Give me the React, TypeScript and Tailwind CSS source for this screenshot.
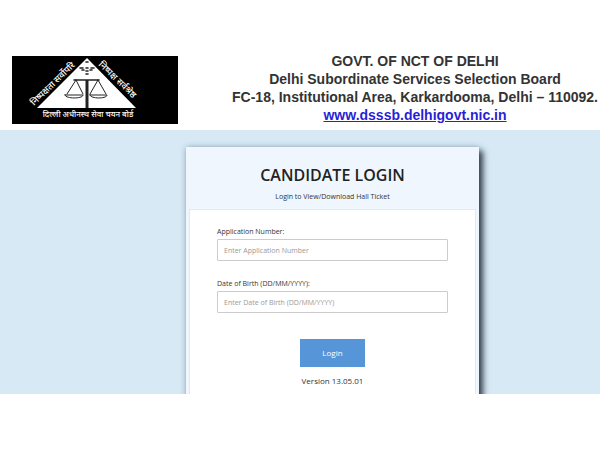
import { useState } from 'react';

function Emblem() {
  return (
    <svg
      viewBox="0 0 166 68"
      role="img"
      aria-label="Delhi Subordinate Services Selection Board"
      className="w-[166px] shrink-0 bg-black font-['Noto_Sans',sans-serif] font-medium"
    >
      <path d="M75 2 L124 52 H25 Z" fill="#fff" />
      <g fill="none" stroke="#222" strokeLinecap="round">
        <path d="M62 24 H87" strokeWidth="1.6" />
        <path d="M75 24 V52" strokeWidth="3" strokeLinecap="butt" />
        <path d="M64 24 L55 38 M64 24 L71 38 M86 24 L78 38 M86 24 L94 38" strokeWidth="1" />
        <path
          d="M53 39 H71 C71 43 53 43 53 39 Z M78 39 H95 C95 43 78 43 78 39 Z"
          strokeWidth="1"
        />
        <path
          d="M74 6 H76 M68 12 H71 M74 12 H76 M79 12 H82 M70 14 H72 M74 15 H76 M78 14 H80 M74 18 H76"
          strokeWidth="1.6"
        />
      </g>
      <g fill="#fff">
        <text x="22" y="50" fontSize="9" transform="rotate(-44 22 50)">निष्पक्षता सर्वोपरि</text>
        <text x="86" y="9" fontSize="9" transform="rotate(44 86 9)">निष्पक्ष सर्वश्रेष्ठ</text>
        <text x="76" y="61" fontSize="8" textAnchor="middle">दिल्ली अधीनस्थ सेवा चयन बोर्ड</text>
      </g>
    </svg>
  );
}

function Header() {
  return (
    <header className="flex items-start justify-between pt-14 pr-0.5 pb-1.5 pl-3">
      <Emblem />
      <div className="-mt-1 text-center text-[14px] leading-[18px] font-bold text-[#333] font-['Liberation_Sans',Arial,sans-serif]">
        <p>GOVT. OF NCT OF DELHI</p>
        <p>Delhi Subordinate Services Selection Board</p>
        <p className="whitespace-nowrap">FC-18, Institutional Area, Karkardooma, Delhi – 110092.</p>
        <a href="http://www.dsssb.delhigovt.nic.in" className="text-[#2a1fd6] underline">
          www.dsssb.delhigovt.nic.in
        </a>
      </div>
    </header>
  );
}

type FieldProps = {
  id: string;
  label: string;
  placeholder: string;
  value: string;
  onChange: (value: string) => void;
};

function Field({ id, label, placeholder, value, onChange }: FieldProps) {
  return (
    <div className="mb-4">
      <label htmlFor={id} className="block text-[7px] leading-[14px] text-[#333]">
        {label}
      </label>
      <input
        id={id}
        type="text"
        value={value}
        placeholder={placeholder}
        onChange={(e) => onChange(e.target.value)}
        className="block h-[22px] w-full rounded-[1px] border border-[#ccc] bg-white px-1.5 text-[7px] text-[#333] placeholder:text-[#999]"
      />
    </div>
  );
}

function LoginCard() {
  const [appNumber, setAppNumber] = useState('');
  const [dob, setDob] = useState('');

  return (
    <form
      onSubmit={(e) => e.preventDefault()}
      className="ml-[31%] w-[48%] min-w-[293px] bg-[#eff6fd] px-[3px] shadow-[4px_4px_6px_#374151,0_0_6px_#9fb4c4]"
    >
      <div className="pt-4 pb-0.5 text-center">
        <h1 className="text-base leading-6 font-semibold text-[#222]">CANDIDATE LOGIN</h1>
        <p className="text-[7px] leading-5 text-[#333]">Login to View/Download Hall Ticket</p>
      </div>
      <div className="border border-[#e3e9f0] bg-white px-[27px] pt-[15px] pb-8">
        <Field
          id="application-number"
          label="Application Number:"
          placeholder="Enter Application Number"
          value={appNumber}
          onChange={setAppNumber}
        />
        <Field
          id="dob"
          label="Date of Birth (DD/MM/YYYY):"
          placeholder="Enter Date of Birth (DD/MM/YYYY)"
          value={dob}
          onChange={setDob}
        />
        <div className="pt-[9px] text-center">
          <button type="submit" className="h-7 w-[65px] bg-[#5695d7] text-[8px] text-white">
            Login
          </button>
          <p className="mt-1.5 text-[8px] leading-4 text-[#333]">Version 13.05.01</p>
        </div>
      </div>
    </form>
  );
}

export default function App() {
  return (
    <div className="bg-white font-['Open_Sans',sans-serif]">
      <Header />
      <main className="max-h-[264px] overflow-hidden bg-[#d6e9f4] pt-[17px]">
        <LoginCard />
      </main>
    </div>
  );
}
